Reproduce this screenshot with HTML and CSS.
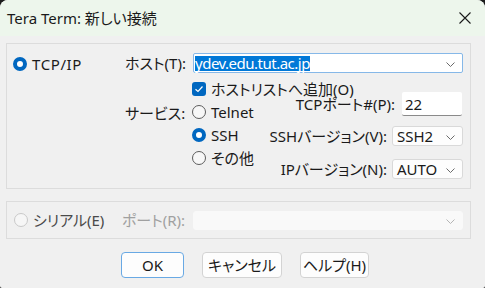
FILE: index.html
```html
<html>
<head>
<title>Tera Term: 新しい接続</title>
<link rel="stylesheet" href="styles.css">
</head>
<body>
<div class="window">
	<div class="titlebar">
		<span class="title">Tera Term: 新しい接続</span>
		<svg class="close" width="12" height="12" viewBox="0 0 12 12"><path d="M0.5 0.5L11.5 11.5M11.5 0.5L0.5 11.5" stroke="#1a1a1a" stroke-width="1.1" fill="none"/></svg>
	</div>

	<div class="group tcp">
		<div class="proto"><span class="radio on"></span>TCP/IP</div>
		<div class="settings">
			<div class="host-row">
				<span class="lbl">ホスト(T):</span>
				<div class="combo host">
					<span class="sel">ydev.edu.tut.ac.jp</span>
					<svg class="arrow" width="9" height="5" viewBox="0 0 9 5"><path d="M0.5 0.5L4.5 4.5L8.5 0.5" stroke="#6b6b6b" fill="none"/></svg>
				</div>
			</div>
			<div class="lower">
				<div class="lbl svc">サービス:</div>
				<div class="col-a">
					<div class="opt"><span class="check"><svg width="14" height="14" viewBox="0 0 14 14"><path d="M3.5 7.2L6 9.5L10.5 4.5" stroke="#fff" stroke-width="1.2" fill="none"/></svg></span>ホストリストへ追加(O)</div>
					<div class="opt"><span class="radio"></span>Telnet</div>
					<div class="opt"><span class="radio on"></span>SSH</div>
					<div class="opt"><span class="radio"></span>その他</div>
				</div>
				<div class="col-b">
					<div class="field-row port">
						<span>TCPポート#(P):</span>
						<div class="edit">22</div>
					</div>
					<div class="field-row ssh">
						<span>SSHバージョン(V):</span>
						<div class="combo small">SSH2<svg class="arrow" width="9" height="5" viewBox="0 0 9 5"><path d="M0.5 0.5L4.5 4.5L8.5 0.5" stroke="#6b6b6b" fill="none"/></svg></div>
					</div>
					<div class="field-row ip">
						<span>IPバージョン(N):</span>
						<div class="combo small">AUTO<svg class="arrow" width="9" height="5" viewBox="0 0 9 5"><path d="M0.5 0.5L4.5 4.5L8.5 0.5" stroke="#6b6b6b" fill="none"/></svg></div>
					</div>
				</div>
			</div>
		</div>
	</div>

	<div class="group serial">
		<div class="serial-opt"><span class="radio off"></span>シリアル(E)</div>
		<span class="port-lbl">ポート(R):</span>
		<div class="combo disabled"><svg class="arrow" width="9" height="5" viewBox="0 0 9 5"><path d="M0.5 0.5L4.5 4.5L8.5 0.5" stroke="#b5b5b5" fill="none"/></svg></div>
	</div>

	<div class="buttons">
		<div class="btn ok">OK</div>
		<div class="btn cancel">キャンセル</div>
		<div class="btn help">ヘルプ(H)</div>
	</div>
</div>
</body>
</html>
```

FILE: styles.css
```css
html {
	background-color: #1c1c1c;
}
body {
	margin: 0;
	font-family: "Noto Sans", "Noto Sans CJK JP", sans-serif;
	font-size: 15px;
	font-feature-settings: "palt";
	color: #1a1a1a;
}
.window {
	width: 485px;
	height: 288px;
	background-color: #f0f0f0;
	border-radius: 8px 8px 2px 2px;
	overflow: hidden;
}

/* title bar */
.titlebar {
	height: 36px;
	background-color: #edf6ec;
	display: flex;
	align-items: center;
	padding: 0 14px 0 7px;
}
.title {
	flex: 1;
	line-height: 16px;
}

/* group boxes */
.group {
	margin: 7px 14px 0 6px;
	border: 1px solid #dcdcdc;
	box-sizing: border-box;
}
.tcp {
	height: 146px;
	display: flex;
}
.proto {
	flex: none;
	width: 118px;
	box-sizing: border-box;
	padding: 13px 0 0 6px;
	display: flex;
	align-items: flex-start;
	gap: 5px;
	line-height: 14px;
	letter-spacing: 0.6px;
}
.settings {
	flex: 1;
	min-width: 0;
	padding: 9px 7px 0 0;
}
.host-row {
	display: flex;
	align-items: center;
	height: 20px;
}
.lbl {
	flex: none;
	width: 68px;
	line-height: 14px;
	white-space: nowrap;
}
.lower {
	display: flex;
}
.svc {
	width: 67px;
	padding-top: 33px;
}
.col-a {
	flex: none;
	width: 66px;
	padding-top: 9px;
	display: flex;
	flex-direction: column;
	gap: 9px;
}
.opt {
	height: 14px;
	display: flex;
	align-items: center;
	gap: 5px;
	line-height: 14px;
	white-space: nowrap;
}
.col-b {
	flex: 1;
	padding-top: 19px;
	display: flex;
	flex-direction: column;
}
.field-row {
	display: flex;
	justify-content: flex-end;
	align-items: center;
	gap: 5px;
	line-height: 14px;
	white-space: nowrap;
}
.port {
	height: 24px;
	gap: 7px;
}
.ssh {
	height: 20px;
	margin-top: 10px;
}
.ip {
	height: 20px;
	margin-top: 13px;
}

/* controls */
.radio {
	width: 14px;
	height: 14px;
	box-sizing: border-box;
	border: 1px solid #5c5c5c;
	border-radius: 50%;
	background-color: #f7f7f7;
	flex: none;
}
.radio.on {
	border: 4px solid #0067c0;
	background-color: #fff;
}
.radio.off {
	border-color: #c9c9c9;
	background-color: #f6f6f6;
}
.check {
	width: 14px;
	height: 14px;
	border-radius: 3px;
	background-color: #0067c0;
	flex: none;
	display: flex;
}
.combo {
	position: relative;
	height: 20px;
	box-sizing: border-box;
	border: 1px solid #d9d9d9;
	border-radius: 3px;
	background-color: #fdfdfd;
	display: flex;
	align-items: center;
	padding-left: 4px;
	line-height: 14px;
}
.combo .arrow {
	position: absolute;
	right: 7px;
	top: 8px;
}
.host {
	flex: 1;
	border-color: #86b8e8;
	border-radius: 2px;
	padding-left: 1px;
	background-color: #fff;
}
.sel {
	background-color: #0078d7;
	color: #fff;
	line-height: 15px;
	letter-spacing: -0.5px;
}
.small {
	flex: none;
	width: 71px;
}
.edit {
	flex: none;
	width: 60px;
	height: 24px;
	box-sizing: border-box;
	background-color: #fff;
	border-bottom: 1px solid #8a8a8a;
	border-radius: 2px;
	margin-right: 1px;
	padding: 5px 0 0 3px;
	line-height: 14px;
}

/* serial group */
.serial {
	margin-top: 12px;
	height: 38px;
	display: flex;
	align-items: center;
	padding: 0 7px 0 7px;
}
.serial-opt {
	flex: none;
	width: 108px;
	display: flex;
	align-items: center;
	gap: 5px;
	color: #4a4a4a;
	line-height: 14px;
	white-space: nowrap;
}
.port-lbl {
	flex: none;
	width: 71px;
	color: #a0a0a0;
	line-height: 14px;
	white-space: nowrap;
}
.disabled {
	flex: 1;
	height: 19px;
	border-color: #f9f9f9;
	background-color: #f9f9f9;
}
.disabled .arrow {
	top: 7px;
}

/* buttons */
.buttons {
	display: flex;
	gap: 18px;
	padding-left: 121px;
	margin-top: 13px;
}
.btn {
	height: 26px;
	box-sizing: border-box;
	border: 1px solid #d3d3d3;
	border-radius: 4px;
	background-color: #fdfdfd;
	display: flex;
	align-items: center;
	justify-content: center;
	line-height: 14px;
}
.ok {
	width: 63px;
	border-color: #69a9e4;
}
.cancel {
	width: 80px;
}
.help {
	width: 69px;
}
```
